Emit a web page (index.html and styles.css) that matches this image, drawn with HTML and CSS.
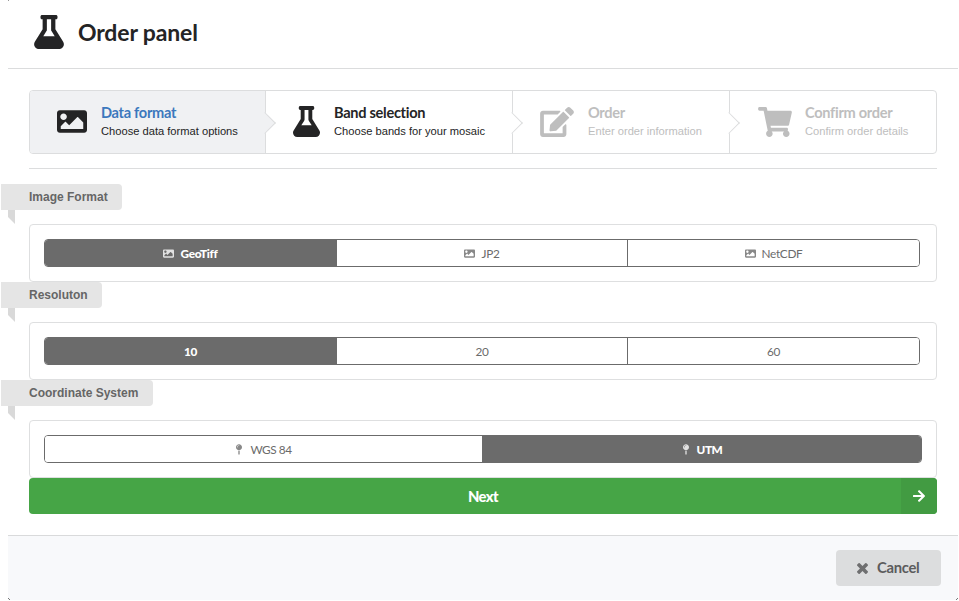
FILE: index.html
```html
<!DOCTYPE html>
<html lang="en">
<head>
<meta charset="utf-8">
<title>Order panel</title>
<link rel="stylesheet" href="styles.css">
</head>
<body>
<svg class="sprite" aria-hidden="true">
  <symbol id="flask" viewBox="0 0 448 512"><path d="M437.2 403.5L320 215V64h8c13.3 0 24-10.7 24-24V24c0-13.3-10.7-24-24-24H120c-13.3 0-24 10.7-24 24v16c0 13.3 10.7 24 24 24h8v151L10.8 403.5C-18.5 450.6 15.3 512 70.9 512h306.2c55.7 0 89.4-61.5 60.1-108.5zM137.9 320l48.2-77.6c3.7-5.2 5.8-11.6 5.8-18.4V64h64v160c0 6.9 2.2 13.2 5.8 18.4l48.2 77.6h-172z"/></symbol>
  <symbol id="image" viewBox="0 0 512 512"><path d="M464 448H48c-26.51 0-48-21.49-48-48V112c0-26.51 21.49-48 48-48h416c26.51 0 48 21.49 48 48v288c0 26.51-21.49 48-48 48zM112 120c-30.928 0-56 25.072-56 56s25.072 56 56 56 56-25.072 56-56-25.072-56-56-56zM64 384h384V272l-87.515-87.515c-4.686-4.686-12.284-4.686-16.971 0L208 320l-55.515-55.515c-4.686-4.686-12.284-4.686-16.971 0L64 336v48z"/></symbol>
  <symbol id="edit" viewBox="0 0 576 512"><path d="M402.6 83.2l90.2 90.2c3.8 3.8 3.8 10 0 13.8L274.4 405.6l-92.8 10.3c-12.4 1.4-22.9-9.1-21.5-21.5l10.3-92.8L388.8 83.2c3.8-3.8 10-3.8 13.8 0zm162-22.9l-48.8-48.8c-15.2-15.2-39.9-15.2-55.2 0l-35.4 35.4c-3.8 3.8-3.8 10 0 13.8l90.2 90.2c3.8 3.8 10 3.8 13.8 0l35.4-35.4c15.2-15.3 15.2-40 0-55.2zM384 346.2V448H64V128h229.8c3.2 0 6.2-1.3 8.5-3.5l40-40c7.6-7.6 2.2-20.5-8.5-20.5H48C21.5 64 0 85.5 0 112v352c0 26.5 21.5 48 48 48h352c26.5 0 48-21.5 48-48V306.2c0-10.7-12.9-16-20.5-8.5l-40 40c-2.2 2.3-3.5 5.3-3.5 8.5z"/></symbol>
  <symbol id="cart" viewBox="0 0 576 512"><path d="M528.12 301.319l47.273-208C578.806 78.301 567.391 64 551.99 64H159.208l-9.166-44.81C147.758 8.021 137.93 0 126.529 0H24C10.745 0 0 10.745 0 24v16c0 13.255 10.745 24 24 24h69.883l70.248 343.435C147.325 417.1 136 435.222 136 456c0 30.928 25.072 56 56 56s56-25.072 56-56c0-15.674-6.447-29.835-16.824-40h209.647C430.447 426.165 424 440.326 424 456c0 30.928 25.072 56 56 56s56-25.072 56-56c0-22.172-12.888-41.332-31.579-50.405l5.517-24.276c3.413-15.018-8.002-29.319-23.403-29.319H218.117l-6.545-32h293.145c11.206 0 20.92-7.754 23.403-18.681z"/></symbol>
  <symbol id="pin" viewBox="0 0 288 512"><path d="M112 316.94v156.69l22.02 33.02c4.75 7.12 15.22 7.12 19.97 0L176 473.63V316.94c-10.39 1.92-21.06 3.06-32 3.06s-21.61-1.14-32-3.06zM144 0C64.47 0 0 64.47 0 144s64.47 144 144 144 144-64.47 144-144S223.53 0 144 0zm0 76c-37.5 0-68 30.5-68 68 0 6.62-5.38 12-12 12s-12-5.38-12-12c0-50.73 41.28-92 92-92 6.62 0 12 5.38 12 12s-5.38 12-12 12z"/></symbol>
  <symbol id="arrow" viewBox="0 0 448 512"><path d="M190.5 66.9l22.2-22.2c9.4-9.4 24.6-9.4 33.9 0L441 239c9.4 9.4 9.4 24.6 0 33.9L246.6 467.3c-9.4 9.4-24.6 9.4-33.9 0l-22.2-22.2c-9.5-9.5-9.3-25 .4-34.3L311.4 296H24c-13.3 0-24-10.7-24-24v-32c0-13.3 10.7-24 24-24h287.4L190.9 101.2c-9.8-9.3-10-24.8-.4-34.3z"/></symbol>
  <symbol id="close" viewBox="110 366 1188 1188"><path d="M1298 1322q0 40-28 68l-136 136q-28 28-68 28t-68-28l-294-294-294 294q-28 28-68 28t-68-28l-136-136q-28-28-28-68t28-68l294-294-294-294q-28-28-28-68t28-68l136-136q28-28 68-28t68 28l294 294 294-294q28-28 68-28t68 28l136 136q28 28 28 68t-28 68l-294 294 294 294q28 28 28 68z"/></symbol>
</svg>
<main class="modal">
  <header class="header">
    <svg class="header-icon"><use href="#flask"/></svg>
    <h1>Order panel</h1>
  </header>
  <section class="content">
    <nav class="steps">
      <div class="step step-format active">
        <svg class="i-image"><use href="#image"/></svg>
        <div class="text"><div class="title">Data format</div><div class="desc">Choose data format options</div></div>
      </div>
      <div class="step step-bands">
        <svg class="i-flask"><use href="#flask"/></svg>
        <div class="text"><div class="title">Band selection</div><div class="desc">Choose bands for your mosaic</div></div>
      </div>
      <div class="step step-order disabled">
        <svg class="i-wide"><use href="#edit"/></svg>
        <div class="text"><div class="title">Order</div><div class="desc">Enter order information</div></div>
      </div>
      <div class="step step-confirm disabled">
        <svg class="i-wide"><use href="#cart"/></svg>
        <div class="text"><div class="title">Confirm order</div><div class="desc">Confirm order details</div></div>
      </div>
    </nav>
    <hr class="divider">
    <div class="ribbon r-image">Image Format</div>
    <div class="segment">
      <div class="buttons thirds">
        <button class="btn on"><svg class="b-image"><use href="#image"/></svg><span>GeoTiff</span></button>
        <button class="btn"><svg class="b-image"><use href="#image"/></svg><span>JP2</span></button>
        <button class="btn"><svg class="b-image"><use href="#image"/></svg><span>NetCDF</span></button>
      </div>
    </div>
    <div class="ribbon r-res">Resoluton</div>
    <div class="segment">
      <div class="buttons thirds">
        <button class="btn on">10</button>
        <button class="btn">20</button>
        <button class="btn">60</button>
      </div>
    </div>
    <div class="ribbon r-coord">Coordinate System</div>
    <div class="segment">
      <div class="buttons halves">
        <button class="btn"><svg class="b-pin"><use href="#pin"/></svg><span>WGS 84</span></button>
        <button class="btn on"><svg class="b-pin"><use href="#pin"/></svg><span>UTM</span></button>
      </div>
    </div>
    <button class="next"><span class="next-label">Next</span><span class="next-icon"><svg><use href="#arrow"/></svg></span></button>
  </section>
  <footer class="actions">
    <button class="cancel"><svg><use href="#close"/></svg><span>Cancel</span></button>
  </footer>
</main>
</body>
</html>
```
FILE: styles.css
```css
* { box-sizing: border-box; }
body { margin: 0; background: #fff; color: #242425; font-family: "Liberation Sans", Arial, sans-serif; overflow: hidden; }
.sprite { display: none; }
svg { display: block; fill: currentColor; flex: none; }
button { font-family: Lato, sans-serif; border: 0; padding: 0; margin: 0; }

.modal { margin: 0 1px 0 8px; height: 600px; display: flex; flex-direction: column; }
.header { height: 69px; border-bottom: 1px solid #dbdcdd; display: flex; padding: 15px 0 0 26px; background: linear-gradient(#999, #999) 0 0 / 1px 1px no-repeat; }
.header-icon { width: 30px; height: 34px; margin-right: 14px; }
h1 { margin: 3px 0 0; font: 700 23px/28px Lato, sans-serif; letter-spacing: -.15px; }

.content { height: 466px; padding: 21px 21px 0; }
.steps { display: flex; height: 64px; border: 1px solid #dcddde; border-radius: 4px; }
.step { position: relative; display: flex; align-items: center; border-right: 1px solid #dcddde; }
.step-format { width: 236px; padding-left: 27px; border-radius: 3px 0 0 3px; }
.step-bands { width: 247px; padding-left: 27px; }
.step-order { width: 217px; padding-left: 27px; }
.step-confirm { flex: 1; padding-left: 28px; border-right: 0; }
.step:not(:last-child)::after { content: ""; position: absolute; z-index: 1; right: -8px; top: 23.5px; width: 15px; height: 15px; background: #fff; border: solid #dcddde; border-width: 0 1px 1px 0; transform: rotate(-45deg) scale(.96); }
.active, .step.active::after { background: #f0f1f3; }
.i-image { width: 30px; height: 31px; margin: 0 14px 1px 0; }
.i-flask { width: 27px; height: 31px; margin: 0 14px 1px 0; }
.i-wide { width: 34px; height: 30px; margin-right: 14px; }
.step-confirm .i-wide { margin-right: 13px; }
.text { padding-bottom: 2px; }
.title { font: 700 14.6px/18px Lato, sans-serif; letter-spacing: -.3px; white-space: nowrap; }
.desc { font-size: 11.15px; line-height: 14px; margin-top: 2px; white-space: nowrap; }
.active .title { color: #3c78bd; }
.disabled { color: #bebebe; }
.divider { margin: 14px 0 15px; border: 0; border-top: 1px solid #dcddde; height: 1px; }

.ribbon { position: relative; height: 26px; margin: 0 0 14px -28px; padding-left: 28px; background: #e5e5e5; color: #666; font-size: 12px; font-weight: 700; line-height: 26px; border-radius: 0 4px 4px 0; white-space: nowrap; }
.ribbon::after { content: ""; position: absolute; left: 7px; top: 26px; width: 7px; height: 14px; background: #d9d9d9; clip-path: polygon(0 0, 100% 0, 100% 100%, 0 50%); }
.r-image { width: 121px; }
.r-res { width: 101px; }
.r-coord { width: 152px; }
.segment { height: 58px; border: 1px solid #dedfe0; border-radius: 4px; padding: 14px; }
.buttons { display: grid; height: 28px; border: 1px solid #6b6b6b; border-radius: 4px; overflow: hidden; }
.thirds { width: 876px; grid-template-columns: 292px 291px 1fr; }
.halves { width: 878px; grid-template-columns: 438px 1fr; }
.btn { display: flex; align-items: center; justify-content: center; padding-top: 2px; background: #fff; color: #6b6b6b; font-size: 11.8px; line-height: 14px; letter-spacing: -.3px; border-right: 1px solid #6b6b6b; }
.btn:last-child { border-right: 0; }
.btn.on { background: #6b6b6b; color: #fff; font-weight: 900; letter-spacing: -.25px; }
.b-image { width: 11px; height: 11px; margin: 0 6px 1px 0; opacity: .8; }
.b-pin { width: 6px; height: 11px; margin: 0 8px 1px 1px; opacity: .8; }
.halves .btn { letter-spacing: -.45px; }

.next { display: flex; width: 100%; height: 36px; border-radius: 4px; overflow: hidden; background: #46a546; color: #fff; font-size: 14.8px; line-height: 18px; font-weight: 900; letter-spacing: -.6px; align-items: center; }
.next-label { flex: 1; padding: 0 0 1px 36px; }
.next-icon { width: 36px; height: 36px; background: #429b42; display: flex; align-items: center; justify-content: center; }
.next-icon svg { width: 12px; height: 14px; }

.actions { height: 65px; background: linear-gradient(#777, #777) 0 62px / 1px 1px no-repeat, linear-gradient(#777, #777) 1px 63px / 1px 1px no-repeat, linear-gradient(#777, #777) 100% 62px / 1px 1px no-repeat, linear-gradient(#777, #777) calc(100% - 1px) 63px / 1px 1px no-repeat, #f8f9fb; border-top: 1px solid #d9dadb; padding: 14px 17px 0 0; display: flex; justify-content: flex-end; }
.cancel { width: 105px; height: 36px; background: #dcddde; color: #5c5c5d; border-radius: 4px; font-size: 14.8px; line-height: 18px; font-weight: 700; letter-spacing: -.3px; display: flex; align-items: center; padding-left: 21px; }
.cancel svg { width: 11px; height: 11px; margin-right: 9px; opacity: .85; }
.cancel span { padding-bottom: 2px; }
```
